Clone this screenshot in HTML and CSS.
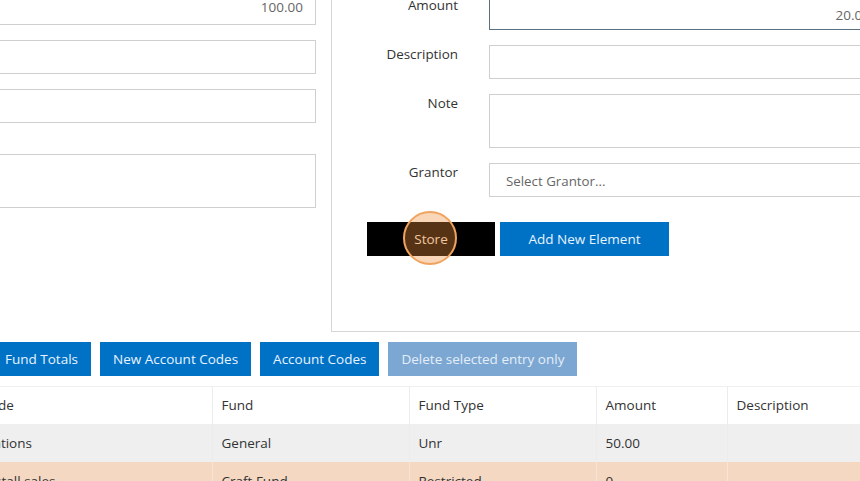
FILE: index.html
```html
<!DOCTYPE html>
<html>
<head>
<meta charset="utf-8">
<link rel="stylesheet" href="styles.css">
</head>
<body>
<div class="page">
  <div class="top">
    <div class="left-col">
      <div class="field field-first"><span class="val">100.00</span></div>
      <div class="field"></div>
      <div class="field"></div>
      <div class="field field-area"></div>
    </div>
    <div class="panel">
      <div class="form">
        <div class="label">Amount</div>
        <div class="field field-focus"><span class="val">20.00</span></div>
        <div class="label">Description</div>
        <div class="field"></div>
        <div class="label">Note</div>
        <div class="field field-area"></div>
        <div class="label">Grantor</div>
        <div class="field field-select"><span class="placeholder">Select Grantor...</span></div>
      </div>
      <div class="panel-actions">
        <button class="btn btn-dark">Store<span class="ripple"></span></button>
        <button class="btn btn-blue btn-add">Add New Element</button>
      </div>
    </div>
  </div>
  <div class="toolbar">
    <button class="btn btn-blue">Fund Totals</button>
    <button class="btn btn-blue">New Account Codes</button>
    <button class="btn btn-blue">Account Codes</button>
    <button class="btn btn-disabled">Delete selected entry only</button>
  </div>
  <table class="grid">
    <thead>
      <tr><th class="c1">Account Code</th><th class="c2">Fund</th><th class="c3">Fund Type</th><th class="c4">Amount</th><th class="c5">Description</th></tr>
    </thead>
    <tbody>
      <tr class="row-grey"><td>Other Donations</td><td>General</td><td>Unr</td><td>50.00</td><td></td></tr>
      <tr class="row-peach"><td>Art &amp; craft stall sales</td><td>Craft Fund</td><td>Restricted</td><td>0</td><td></td></tr>
    </tbody>
  </table>
</div>
</body>
</html>
```

FILE: styles.css
```css
html, body {
  margin: 0;
  padding: 0;
  background: #ffffff;
  overflow: hidden;
}
body {
  width: 860px;
  height: 481px;
  font-family: "Open Sans", "Liberation Sans", sans-serif;
  font-size: 13.5px;
  color: #333333;
}
.page {
  width: 860px;
  overflow: hidden;
}
.top {
  display: flex;
  margin-top: -20px;
}
.left-col {
  width: 326px;
  margin-left: -10px;
  flex: none;
  display: flex;
  flex-direction: column;
  padding-top: 10px;
}
.field {
  box-sizing: border-box;
  height: 34px;
  border: 1px solid #cfcfcf;
  background: #fff;
  display: flex;
  align-items: center;
  justify-content: flex-end;
  padding: 0 12px;
  color: #555;
}
.left-col .field { margin-bottom: 15px; }
.left-col .field-first { height: 35px; }
.left-col .field-area { margin-top: 16px; }
.field-area { height: 54px; }
.val { color: #666; font-size: 13.5px; }
.left-col .field-first .val { margin-bottom: 2px; }
.panel {
  flex: 1;
  margin-left: 15px;
  margin-right: -30px;
  border-left: 1px solid #d6d6d6;
  border-bottom: 1px solid #d6d6d6;
  padding: 16px 15px 75px 0;
}
.form {
  display: grid;
  grid-template-columns: 126px 1fr;
  column-gap: 31px;
  row-gap: 15px;
}
.label {
  text-align: right;
  padding-top: 0;
  line-height: 19px;
  font-size: 13.4px;
}
.field-focus {
  border-color: #5a7080;
  padding-right: 4px;
}
.field-focus .val { padding-top: 3px; }
.field-select {
  justify-content: flex-start;
  padding-left: 16px;
}
.placeholder {
  color: #666;
  font-size: 13.3px;
  padding-top: 2px;
}
.panel-actions {
  display: flex;
  gap: 5px;
  padding-left: 35px;
  margin-top: 25px;
}
.btn {
  box-sizing: border-box;
  height: 34px;
  border: none;
  padding: 0 13px;
  font-family: "Open Sans", "Liberation Sans", sans-serif;
  font-size: 13.5px;
  color: #e8f3ff;
  cursor: pointer;
  position: relative;
}
.btn-dark {
  width: 128px;
  background: #000;
  color: #f3e4d6;
}
.btn-blue { background: #0072c6; }
.btn-add { width: 169px; }
.btn-disabled {
  background: #7ca7d2;
  color: #e4eef8;
}
.ripple {
  position: absolute;
  left: 36px;
  top: -11px;
  width: 50px;
  height: 50px;
  border-radius: 50%;
  border: 2px solid #f0a35e;
  background: rgba(242, 140, 60, 0.36);
}
.toolbar {
  display: flex;
  gap: 9px;
  margin-top: 10px;
  margin-left: -8px;
}
.grid {
  border-collapse: collapse;
  margin-top: 10px;
  margin-left: -82px;
  width: 1000px;
  table-layout: fixed;
}
.grid th, .grid td {
  box-sizing: border-box;
  text-align: left;
  font-weight: normal;
  padding: 0 0 0 9px;
  white-space: nowrap;
  overflow: hidden;
  border-left: 1px solid #ececec;
}
.grid th:first-child, .grid td:first-child { border-left: none; }
.grid th {
  height: 37px;
  border-top: 1px solid #f0f0f0;
}
.grid td { height: 38px; }
.c1 { width: 294px; }
.c2 { width: 197px; }
.c3 { width: 187px; }
.c4 { width: 131px; }
.row-grey td { background: #efefef; }
.row-peach td { background: #f5d8c2; border-left-color: #f8e4d6; }
```
